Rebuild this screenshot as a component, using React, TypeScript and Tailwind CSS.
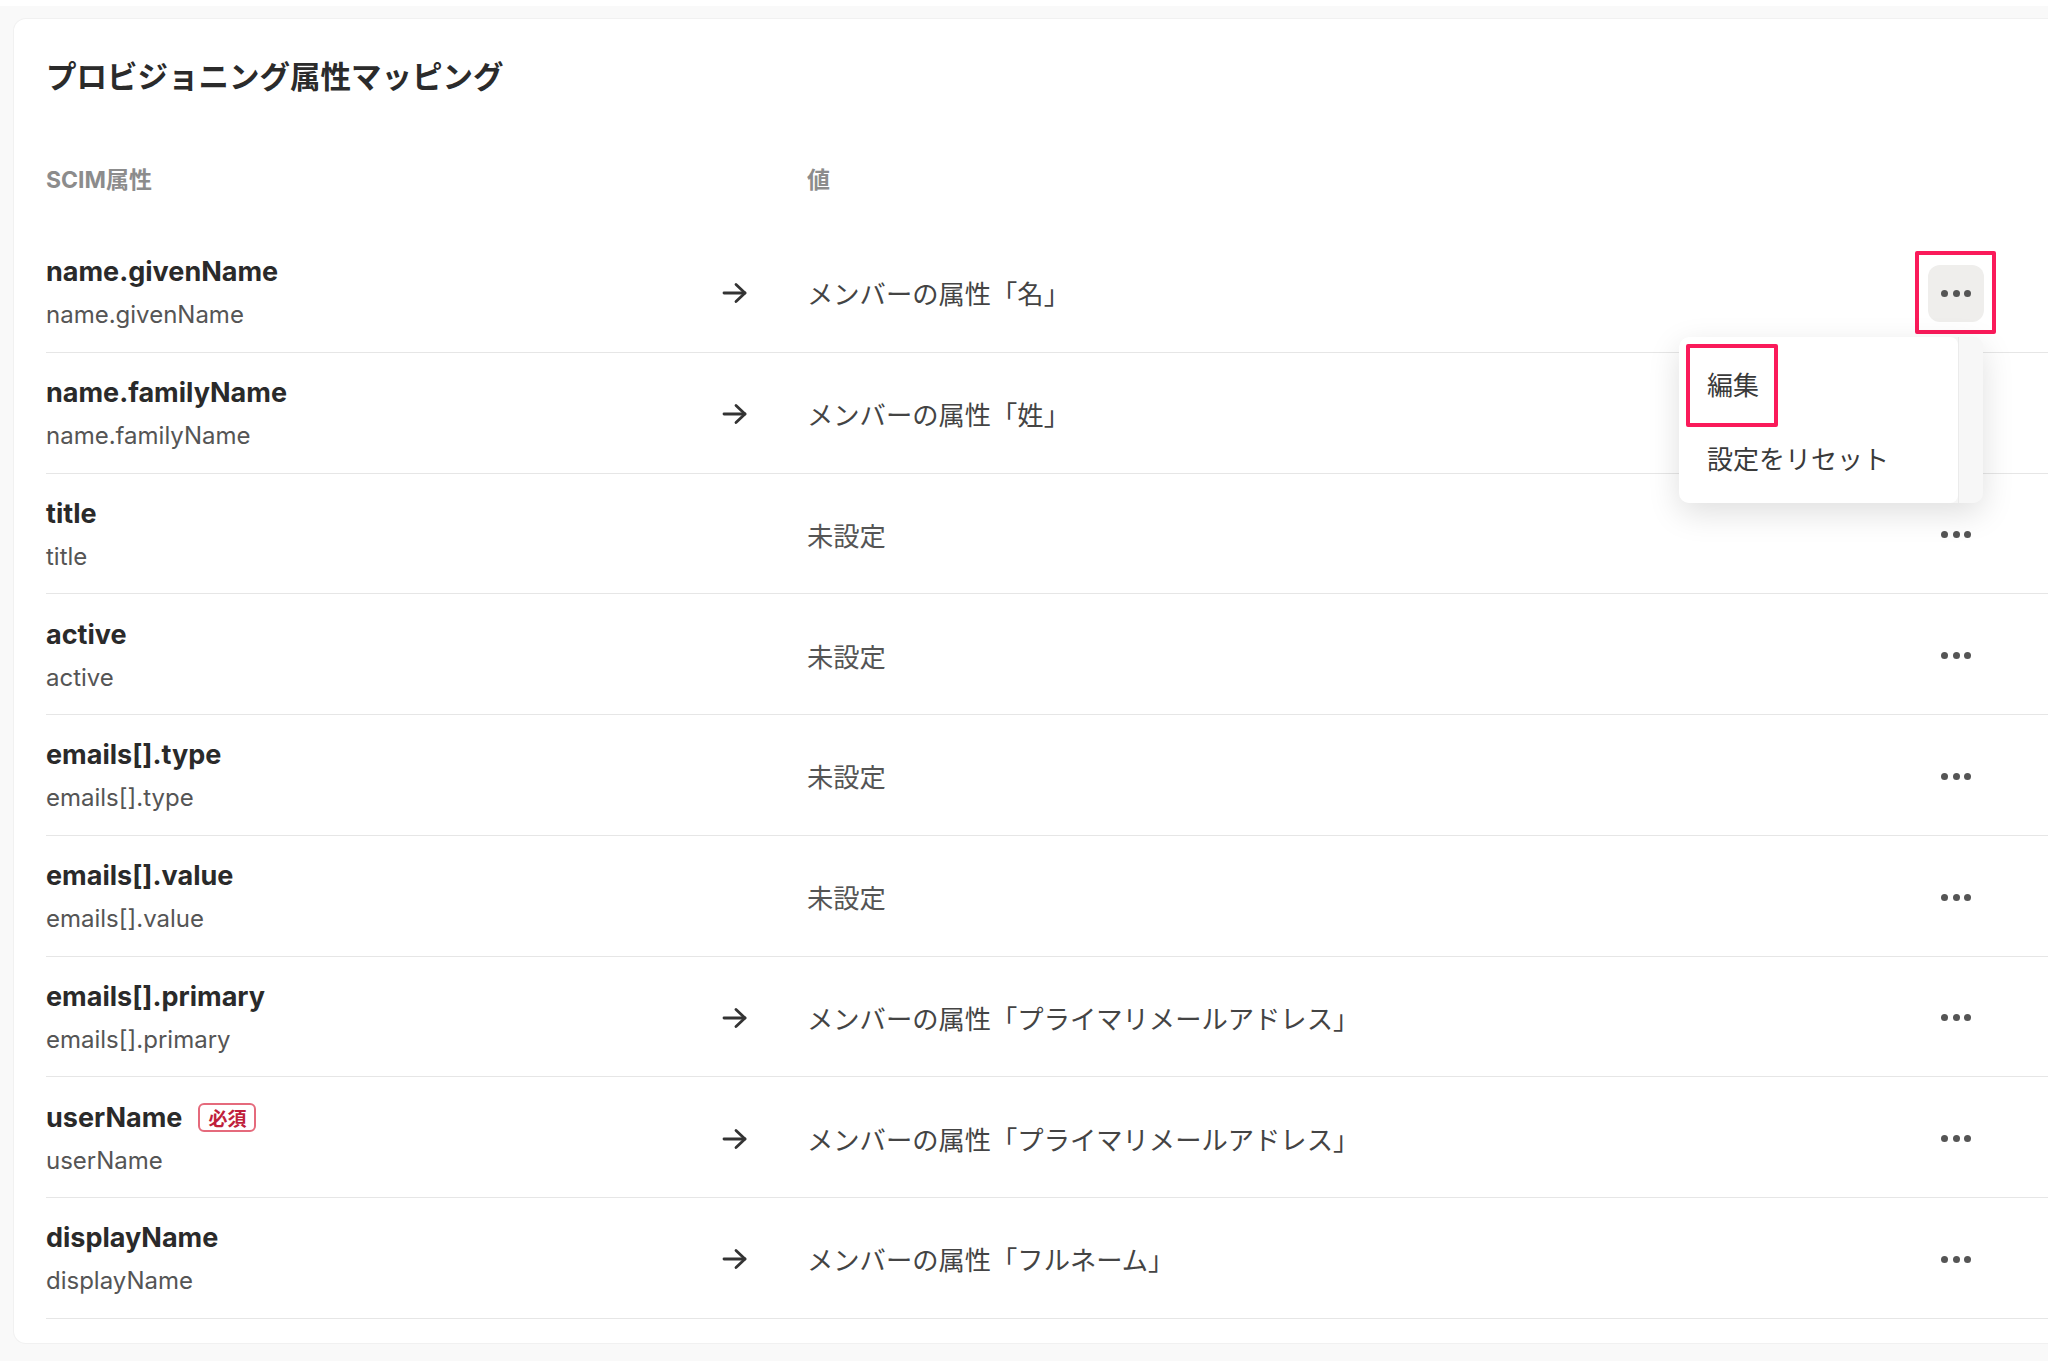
import React from "react";

type Row = { name: string; sub: string; value?: string; required?: boolean };

const rows: Row[] = [
  { name: "name.givenName", sub: "name.givenName", value: "メンバーの属性「名」" },
  { name: "name.familyName", sub: "name.familyName", value: "メンバーの属性「姓」" },
  { name: "title", sub: "title" },
  { name: "active", sub: "active" },
  { name: "emails[].type", sub: "emails[].type" },
  { name: "emails[].value", sub: "emails[].value" },
  { name: "emails[].primary", sub: "emails[].primary", value: "メンバーの属性「プライマリメールアドレス」" },
  { name: "userName", sub: "userName", value: "メンバーの属性「プライマリメールアドレス」", required: true },
  { name: "displayName", sub: "displayName", value: "メンバーの属性「フルネーム」" },
];

function Arrow() {
  return (
    <svg width="26" height="22" viewBox="0 0 26 22" fill="none" stroke="#333" strokeWidth="2.8" strokeLinecap="round" strokeLinejoin="round">
      <path d="M2 11h21" />
      <path d="M14 2.5l9 8.5-9 8.5" />
    </svg>
  );
}

function Dots() {
  return (
    <div className="flex items-center gap-[4.5px]">
      <span className="w-[7px] h-[7px] rounded-full bg-[#555]" />
      <span className="w-[7px] h-[7px] rounded-full bg-[#555]" />
      <span className="w-[7px] h-[7px] rounded-full bg-[#555]" />
    </div>
  );
}

export default function App() {
  return (
    <div className="relative w-[2048px] h-[1361px] overflow-hidden bg-[#f9f9f9] font-['Inter','Noto_Sans_CJK_JP',sans-serif]">
      <div className="h-[6px] bg-white" />
      <div className="ml-[14px] mt-[13px] w-[2100px] bg-white rounded-[12px] shadow-[0_0_0_1px_#f1f1f1] pl-[32px] pt-[36px] pb-[24px]">
        <h1 className="text-[30.5px] leading-[40px] font-bold text-[#2b2b2b] font-['Noto_Sans_CJK_JP',sans-serif]">プロビジョニング属性マッピング</h1>
        <div className="mt-[70px] flex text-[23px] leading-[30px] font-bold text-[#8c8c8c]">
          <div className="w-[761px]">SCIM属性</div>
          <div>値</div>
        </div>
        <div className="mt-[37px]">
          {rows.map((r, i) => (
            <div key={i} className="h-[120.75px] box-border border-b border-[#e6e6e6] flex items-center pt-[3px] pr-[130px]">
              <div className="w-[676px] flex flex-col">
                <div className="flex items-center h-[36px]">
                  <span className="text-[27px] leading-[36px] font-bold text-[#2a2a2a]">{r.name}</span>
                  {r.required && (
                    <span className="ml-[16px] inline-flex items-center h-[29px] px-[8px] border-2 border-[#e56a7c] rounded-[6px] text-[19px] leading-none font-bold text-[#c01f3b] font-['Noto_Sans_CJK_JP',sans-serif]">
                      必須
                    </span>
                  )}
                </div>
                <span className="mt-[8px] text-[24px] leading-[34px] text-[#555]">{r.sub}</span>
              </div>
              <div className="w-[26px] flex items-center justify-center">{r.value ? <Arrow /> : null}</div>
              <div className="ml-[59px] flex-1 text-[26.3px] leading-[34px] text-[#444] font-['Noto_Sans_CJK_JP',sans-serif]">
                {r.value ?? <span className="text-[#555]">未設定</span>}
              </div>
              <div
                className={
                  i === 0
                    ? "w-[56px] h-[57px] rounded-[12px] bg-[#efeeec] flex items-center justify-center"
                    : "w-[56px] h-[57px] rounded-[12px] flex items-center justify-center"
                }
              >
                <Dots />
              </div>
            </div>
          ))}
        </div>
      </div>

      {/* highlight around first action button */}
      <div className="absolute left-[1915px] top-[251px] w-[81px] h-[83px] border-[4px] border-[#fa1a5a] rounded-[2px]" />

      {/* dropdown menu */}
      <div className="absolute left-[1679px] top-[337px] w-[304px] h-[166px] rounded-[10px] bg-[#f6f6f6] shadow-[0_10px_32px_rgba(0,0,0,0.13)] flex overflow-hidden">
        <div className="flex-1 bg-white rounded-r-[8px] pt-[9px] pb-[9px] font-['Noto_Sans_CJK_JP',sans-serif] text-[26px] text-[#3a3a3a]">
          <div className="h-[74px] flex items-center pl-[28px]">編集</div>
          <div className="h-[74px] flex items-center pl-[28px]">設定をリセット</div>
        </div>
        <div className="w-[25px] border-l border-[#ebebeb] bg-[#f7f7f7]" />
        <div className="absolute left-[7px] top-[7px] w-[92px] h-[83px] border-[4px] border-[#fa1a5a] rounded-[2px]" />
      </div>
    </div>
  );
}
